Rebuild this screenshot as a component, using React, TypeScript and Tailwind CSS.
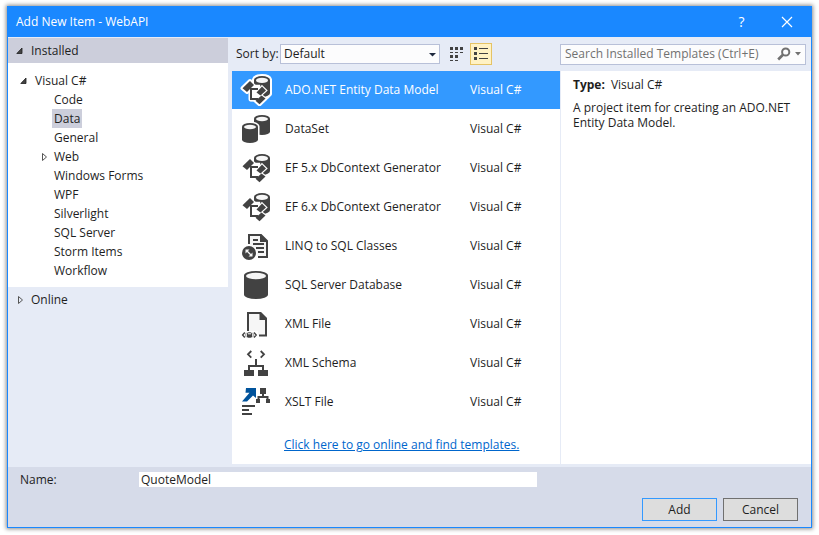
import { useState } from "react";
import type { ReactNode } from "react";

const INK = "#424242";

function Cylinder({ x, y, w, h, ry }: { x: number; y: number; w: number; h: number; ry: number }) {
  const rx = w / 2;
  return (
    <>
      <path
        d={`M${x} ${y + ry}A${rx} ${ry} 0 0 1 ${x + w} ${y + ry}V${y + h - ry}A${rx} ${ry} 0 0 1 ${x} ${y + h - ry}Z`}
        fill={INK}
      />
      <ellipse cx={x + rx} cy={y + ry + 0.4} rx={rx - 2} ry={ry - 1.4} fill="#f6f6f6" />
    </>
  );
}

const LINKS = "M11 15H18M11 14V25H18";
const BLOCKS = ["M10 7L14 11L7 18L2.5 14.3Z", "M22 12.5L26 16.5L20.5 21.5L16.5 18.5Z", "M21.5 21.5L25.5 24.5L19.5 30.2L15.5 26.8Z"];

function EntityIcon({ selected }: { selected?: boolean }) {
  return (
    <>
      {selected && (
        <g fill="#fff" stroke="#fff" strokeWidth="4" strokeLinejoin="round">
          <path d="M14 5.5Q15 2 22 2T30 5.5V20L27 23L14 12Z" />
          {BLOCKS.map((d) => <path key={d} d={d} />)}
          <path d={LINKS} fill="none" strokeWidth="5" />
        </g>
      )}
      <Cylinder x={14} y={2} w={16} h={21} ry={4} />
      <g fill="#fff" stroke="#fff" strokeWidth="2.4">
        {BLOCKS.map((d) => <path key={d} d={d} />)}
        <path d="M11 12H19V26H11Z" />
      </g>
      <path d={LINKS} fill="none" stroke={INK} strokeWidth="2" />
      {BLOCKS.map((d) => <path key={d} d={d} fill={INK} />)}
    </>
  );
}

const dataSetIcon = (
  <>
    <Cylinder x={14} y={2} w={16} h={20} ry={3.6} />
    <path d="M0.5 13Q2 8.6 10 8.6T19.5 13V30H0.5Z" fill="#fff" />
    <Cylinder x={2} y={10} w={16} h={20} ry={3.6} />
  </>
);

const linqIcon = (
  <>
    <path d="M9 14V5H21L27 11V27H18" fill="#f6f6f6" stroke={INK} strokeWidth="2" />
    <path d="M20 4L28 12H20Z" fill={INK} />
    <path d="M13 10H18M13 14H24M16 18H24M18 22H24" stroke={INK} strokeWidth="2" />
    <circle cx="9" cy="23" r="8" fill="#fff" />
    <circle cx="9" cy="23" r="7" fill={INK} />
    <path d="M5.5 19.5H9.5L5.5 23.5ZM12.5 26.5H8.5L12.5 22.5Z" fill="#f6f6f6" />
    <path d="M7 21L11 25" stroke="#f6f6f6" strokeWidth="1.2" />
  </>
);

const databaseIcon = <Cylinder x={4} y={2} w={24} h={28} ry={4.6} />;

const xmlFileIcon = (
  <>
    <path d="M8 23V5H20L26 11V27.5H19" fill="#f6f6f6" stroke={INK} strokeWidth="2" />
    <path d="M19.5 4H21L27 10V12H19.5Z" fill={INK} />
    <path d="M1 23H18V31H1Z" fill="#fff" />
    <path d="M4.8 24.5L2.6 27L4.8 29.5M14 24.5L16.2 27L14 29.5" fill="none" stroke={INK} strokeWidth="1.4" />
    <rect x="7" y="24.2" width="5" height="5.6" rx="1.6" fill={INK} />
    <path d="M8 25.8H11" stroke="#fff" strokeWidth="1" />
    <path d="M6.2 24.8Q5.2 27 6.2 29.2M12.8 24.8Q13.8 27 12.8 29.2" fill="none" stroke={INK} strokeWidth="0.6" />
  </>
);

const xmlSchemaIcon = (
  <>
    <path d="M11.3 4L8 7.3L11.3 10.6M20.7 4L24 7.3L20.7 10.6" fill="none" stroke={INK} strokeWidth="1.8" />
    <path d="M16 12V19M9 24V19H23V24" fill="none" stroke={INK} strokeWidth="2" />
    <path d="M4 23H14V29H4ZM18 23H28V29H18Z" fill={INK} />
  </>
);

const xsltIcon = (
  <>
    <path d="M6 2H16V12L13 9.5L7 15.5H2L9.5 6.8H5.5Z" fill="#00539c" />
    <path d="M20 2H26V8H20ZM16 13H20V17H16ZM26 13H30V17H26Z" fill={INK} />
    <path d="M23 7V11M18.5 13.5V11H27.5V13.5" fill="none" stroke={INK} strokeWidth="2" />
    <path d="M2 20H15M2 24H9M2 28H12" stroke={INK} strokeWidth="2" />
  </>
);

const templates: { name: string; icon: ReactNode }[] = [
  { name: "ADO.NET Entity Data Model", icon: <EntityIcon selected /> },
  { name: "DataSet", icon: dataSetIcon },
  { name: "EF 5.x DbContext Generator", icon: <EntityIcon /> },
  { name: "EF 6.x DbContext Generator", icon: <EntityIcon /> },
  { name: "LINQ to SQL Classes", icon: linqIcon },
  { name: "SQL Server Database", icon: databaseIcon },
  { name: "XML File", icon: xmlFileIcon },
  { name: "XML Schema", icon: xmlSchemaIcon },
  { name: "XSLT File", icon: xsltIcon },
];

const categories = ["Code", "Data", "General", "Web", "Windows Forms", "WPF", "Silverlight", "SQL Server", "Storm Items", "Workflow"];

function Expanded() {
  return (
    <svg width="7" height="8" viewBox="0 0 7 8" className="shrink-0" aria-hidden="true">
      <path d="M6 1V6.5H0.8Z" fill="#444" stroke="#1e1e1e" strokeWidth="0.8" />
    </svg>
  );
}

function Collapsed() {
  return (
    <svg width="8" height="8" viewBox="0 0 8 8" className="shrink-0" aria-hidden="true">
      <path d="M2.5 0.5V7.5L6.5 4Z" fill="none" stroke="#555" />
    </svg>
  );
}

export default function App() {
  const [name, setName] = useState("QuoteModel");
  return (
    <div className="min-h-screen bg-white px-[7px] pt-1.5 pb-[7px] font-['Open_Sans','Noto_Sans',sans-serif] text-xs text-[#1e1e1e]">
      <div className="border border-[#1a88ff] bg-[#e6ebf6] shadow-[0_0_4px_1px_rgba(0,0,0,0.45)]">
        <header className="flex h-[30px] items-center bg-[#1a88ff] pr-0.5 pl-2 text-white">
          <h1 className="flex-1">Add New Item - WebAPI</h1>
          <button type="button" aria-label="Help" className="w-[45px] text-sm">?</button>
          <button type="button" aria-label="Close" className="flex w-[45px] justify-center">
            <svg width="12" height="12" viewBox="0 0 12 12" aria-hidden="true">
              <path d="M1 1L11 11M11 1L1 11" stroke="#fff" strokeWidth="1.2" />
            </svg>
          </button>
        </header>

        <div className="flex gap-1 pb-[3px]">
          <nav aria-label="Template categories" className="w-[220px] shrink-0 pt-px">
            <button type="button" className="flex h-[25px] w-full items-center gap-2 bg-[#cccedb] pl-2">
              <Expanded />
              Installed
            </button>
            <div className="bg-white pt-2 pb-[7px]">
              <button type="button" className="flex h-[19px] items-center gap-2 pl-3">
                <Expanded />
                Visual C#
              </button>
              <ul>
                {categories.map((c) => (
                  <li key={c} className="flex items-center pl-8">
                    <span className="flex w-3">{c === "Web" && <Collapsed />}</span>
                    <button type="button" className={`h-[19px] px-0.5 ${c === "Data" ? "bg-[#cccedb]" : ""}`}>
                      {c}
                    </button>
                  </li>
                ))}
              </ul>
            </div>
            <button type="button" className="flex h-[25px] w-full items-center gap-[7px] pl-2">
              <Collapsed />
              Online
            </button>
          </nav>

          <main className="flex min-w-0 flex-1 flex-col">
            <div className="flex h-[34px] items-center pr-[5px] pl-1">
              <label htmlFor="sort" className="w-11 whitespace-nowrap">Sort by:</label>
              <div className="relative">
                <select id="sort" className="h-5 w-40 appearance-none border border-[#b8c0d8] bg-[#fcfcfd] pl-[3px] outline-none">
                  <option>Default</option>
                </select>
                <svg width="7" height="4" viewBox="0 0 7 4" className="pointer-events-none absolute top-[9px] right-1" aria-hidden="true">
                  <path d="M0 0H7L3.5 3.5Z" fill="#1e293e" />
                </svg>
              </div>
              <button type="button" aria-label="Small icons" className="ml-[5px] flex size-[22px] items-center justify-center">
                <svg width="13" height="14" viewBox="0 0 13 14" aria-hidden="true">
                  <path d="M0 0H3V3H0ZM5 0H8V3H5ZM10 0H13V3H10ZM0 5H3V6H0ZM5 5H8V6H5ZM10 5H13V6H10ZM0 8H3V11H0ZM5 8H8V11H5ZM0 13H3V14H0ZM5 13H8V14H5Z" fill={INK} />
                </svg>
              </button>
              <button type="button" aria-label="List" className="ml-[3px] flex size-[22px] items-center justify-center border border-[#e5c365] bg-[#fff2c4]">
                <svg width="14" height="14" viewBox="0 0 14 14" aria-hidden="true">
                  <path d="M0 0H3V3H0ZM0 5H3V8H0ZM0 10H3V13H0ZM5 1H14V2H5ZM5 6H14V7H5ZM5 11H14V12H5Z" fill={INK} />
                </svg>
              </button>
              <div className="ml-auto flex h-[21px] w-[246px] items-center border border-[#b8c0d8] bg-[#fcfcfd]">
                <input aria-label="Search Installed Templates" placeholder="Search Installed Templates (Ctrl+E)" className="min-w-0 flex-1 bg-transparent pl-1 outline-none placeholder:text-[#717171]" />
                <button type="button" aria-label="Search" className="px-1">
                  <svg width="14" height="14" viewBox="0 0 14 14" aria-hidden="true">
                    <circle cx="8.7" cy="5" r="3.6" fill="none" stroke="#717171" strokeWidth="2" />
                    <path d="M6.2 7.5L1.2 12.5" stroke="#717171" strokeWidth="2.6" />
                  </svg>
                </button>
                <button type="button" aria-label="Search options" className="pr-1">
                  <svg width="6" height="4" viewBox="0 0 6 4" aria-hidden="true">
                    <path d="M0 0H6L3 3.5Z" fill="#717171" />
                  </svg>
                </button>
              </div>
            </div>

            <div className="flex flex-1 gap-px">
              <section aria-label="Templates" className="min-w-0 flex-1 bg-white">
                <ul className="flex flex-col gap-px">
                  {templates.map((t, i) => (
                    <li key={t.name}>
                      <button type="button" className={`flex h-[38px] w-full items-center pl-2 text-left ${i === 0 ? "bg-[#3399ff] text-white" : ""}`}>
                        <svg width="32" height="32" viewBox="0 0 32 32" className="shrink-0" aria-hidden="true">{t.icon}</svg>
                        <span className="flex-1 pl-[13px]">{t.name}</span>
                        <span className="w-[90px]">Visual C#</span>
                      </button>
                    </li>
                  ))}
                </ul>
                <div className="flex pt-4 pr-4 pb-[11px] pl-[52px] leading-4">
                  <a href="#online" className="text-[#0066cc] underline">
                    Click here to go online and find templates.
                  </a>
                </div>
              </section>
              <aside aria-label="Description" className="w-[250px] shrink-0 bg-white px-3 pt-1.5 leading-[15px]">
                <p><strong className="mr-1.5">Type:</strong>Visual C#</p>
                <p className="mt-2">A project item for creating an ADO.NET Entity Data Model.</p>
              </aside>
            </div>
          </main>
        </div>

        <footer className="bg-[#d6dbe9] pt-[5px] pr-[13px] pb-1.5 pl-3">
          <div className="flex h-[15px] items-center">
            <label htmlFor="item-name" className="w-[119px]">Name:</label>
            <input id="item-name" value={name} onChange={(e) => setName(e.target.value)} className="h-[15px] w-[398px] bg-white px-0.5 outline-none" />
          </div>
          <div className="mt-[11px] flex justify-end gap-1.5">
            <button type="button" className="h-[23px] w-[75px] border border-[#3399ff] bg-[#dddddd]">Add</button>
            <button type="button" className="h-[23px] w-[75px] border border-[#707070] bg-[#dddddd]">Cancel</button>
          </div>
        </footer>
      </div>
    </div>
  );
}
